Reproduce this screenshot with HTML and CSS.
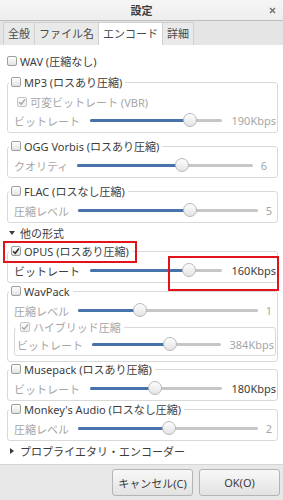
FILE: index.html
```html
<html>
    <head>
        <title>設定</title>
        <link rel="stylesheet" href="styles.css">
    </head>
    <body>
        <div class="window">
            <div class="titlebar">
                <span class="title">設定</span>
                <svg class="close" width="7" height="7" viewBox="0 0 7 7">
                    <path d="M1 1L6 6M6 1L1 6" stroke="#6a6a6a" stroke-width="1.3" />
                </svg>
            </div>

            <div class="tabs">
                <span class="tab">全般</span>
                <span class="tab">ファイル名</span>
                <span class="tab active">エンコード</span>
                <span class="tab">詳細</span>
            </div>

            <div class="page">
                <div class="check-row"><span class="box"></span>WAV (圧縮なし)</div>

                <fieldset class="frame first">
                    <legend><span class="box"></span>MP3 (ロスあり圧縮)</legend>
                    <div class="sub off">
                        <span class="box dim"><svg width="8" height="8" viewBox="0 0 8 8"><path d="M1 4.2L3.2 6.3L7 1.5" fill="none" stroke="#a8a8a8" stroke-width="1.4" /></svg></span>可変ビットレート (VBR)
                    </div>
                    <div class="scale-row rate">
                        <span class="label off">ビットレート</span>
                        <span class="track"><span class="fill" style="width:75.8%"></span><span class="knob" style="left:75.8%"></span></span>
                        <span class="value off">190Kbps</span>
                    </div>
                </fieldset>

                <fieldset class="frame">
                    <legend><span class="box"></span>OGG Vorbis (ロスあり圧縮)</legend>
                    <div class="scale-row quality">
                        <span class="label off">クオリティ</span>
                        <span class="track"><span class="fill" style="width:59.7%"></span><span class="knob" style="left:59.7%"></span></span>
                        <span class="value off">6</span>
                    </div>
                </fieldset>

                <fieldset class="frame">
                    <legend><span class="box"></span>FLAC (ロスなし圧縮)</legend>
                    <div class="scale-row level">
                        <span class="label off">圧縮レベル</span>
                        <span class="track"><span class="fill" style="width:62.2%"></span><span class="knob" style="left:62.2%"></span></span>
                        <span class="value off">5</span>
                    </div>
                </fieldset>

                <div class="expander"><span class="arrow-down"></span>他の形式</div>

                <div class="more">
                    <fieldset class="frame">
                        <legend><span class="box"><svg width="8" height="8" viewBox="0 0 8 8"><path d="M1 4.2L3.2 6.3L7 1.5" fill="none" stroke="#2e2e2e" stroke-width="1.5" /></svg></span>OPUS (ロスあり圧縮)</legend>
                        <div class="scale-row rate">
                            <span class="label">ビットレート</span>
                            <span class="track"><span class="fill" style="width:75%"></span><span class="knob" style="left:75%"></span></span>
                            <span class="value">160Kbps</span>
                        </div>
                    </fieldset>

                    <fieldset class="frame wavpack">
                        <legend><span class="box"></span>WavPack</legend>
                        <div class="scale-row level">
                            <span class="label off">圧縮レベル</span>
                            <span class="track"><span class="fill" style="width:34.4%"></span><span class="knob" style="left:34.4%"></span></span>
                            <span class="value off">1</span>
                        </div>
                        <fieldset class="frame nested">
                            <legend class="off"><span class="box dim"><svg width="8" height="8" viewBox="0 0 8 8"><path d="M1 4.2L3.2 6.3L7 1.5" fill="none" stroke="#a8a8a8" stroke-width="1.4" /></svg></span>ハイブリッド圧縮</legend>
                            <div class="scale-row hybrid">
                                <span class="label off">ビットレート</span>
                                <span class="track"><span class="fill" style="width:60.2%"></span><span class="knob" style="left:60.2%"></span></span>
                                <span class="value off">384Kbps</span>
                            </div>
                        </fieldset>
                    </fieldset>

                    <fieldset class="frame musepack">
                        <legend><span class="box"></span>Musepack (ロスあり圧縮)</legend>
                        <div class="scale-row rate">
                            <span class="label off">ビットレート</span>
                            <span class="track"><span class="fill" style="width:49.2%"></span><span class="knob" style="left:49.2%"></span></span>
                            <span class="value">180Kbps</span>
                        </div>
                    </fieldset>

                    <fieldset class="frame">
                        <legend><span class="box"></span>Monkey's Audio (ロスなし圧縮)</legend>
                        <div class="scale-row level">
                            <span class="label off">圧縮レベル</span>
                            <span class="track"><span class="fill" style="width:50.6%"></span><span class="knob" style="left:50.6%"></span></span>
                            <span class="value off">2</span>
                        </div>
                    </fieldset>
                </div>

                <div class="expander closed"><span class="arrow-right"></span>プロプライエタリ・エンコーダー</div>
            </div>

            <div class="buttons">
                <span class="btn">キャンセル(C)</span>
                <span class="btn">OK(O)</span>
            </div>

            <!-- red annotation boxes -->
            <div class="mark mark-opus"></div>
            <div class="mark mark-rate"></div>
        </div>
    </body>
</html>
```

FILE: styles.css
```css
body {
    margin: 0;
    font-family: "Noto Sans", "Noto Sans CJK JP", sans-serif;
    font-size: 11px;
    color: #3c3c3c;
    background: #e8e8e8;
}

.window {
    width: 283px;
    height: 500px;
    position: relative;
    display: flex;
    flex-direction: column;
    overflow: hidden;
}

/* title bar */
.titlebar {
    height: 20px;
    flex: none;
    border-bottom: 1px solid #bebebe;
    background: linear-gradient(#f5f5f5, #eeeeee);
    display: grid;
    grid-template-columns: 1fr auto 1fr;
    align-items: center;
}
.title {
    grid-column: 2;
    font-weight: bold;
    color: #3a3a3a;
}
.close {
    grid-column: 3;
    justify-self: end;
    margin-right: 7px;
}

/* notebook tabs */
.tabs {
    height: 24px;
    flex: none;
    display: flex;
    align-items: flex-end;
    padding-left: 3px;
    background: #e5e5e5;
}
.tab {
    height: 22px;
    line-height: 22px;
    padding: 0 4px;
    border: 1px solid #d0d0d0;
    border-bottom: none;
    margin-right: -1px;
    background: #e9e9e9;
    color: #4a4a4a;
}
.tab.active {
    background: #fff;
    position: relative;
    z-index: 1;
}

/* page */
.page {
    height: 420px;
    flex: none;
    box-sizing: border-box;
    padding-top: 6px;
    background: #fff;
    border-bottom: 1px solid #d6d6d6;
}

.box {
    width: 10px;
    height: 10px;
    box-sizing: border-box;
    flex: none;
    border: 1px solid #9e9e9e;
    border-radius: 2px;
    background: linear-gradient(#ffffff, #e2e2e2);
    display: inline-flex;
    align-items: center;
    justify-content: center;
    margin-right: 3px;
}
.box.dim {
    border-color: #c4c4c4;
    background: linear-gradient(#fbfbfb, #efefef);
}

.off {
    color: #a6a6a6;
}

.check-row {
    height: 20px;
    display: flex;
    align-items: center;
    padding-left: 7px;
}

/* frames */
.frame {
    margin: 6px 5px 0 7px;
    padding: 3px 1px 2px 1px;
    border: 1px solid #d9d9d9;
    border-radius: 3px;
    min-width: 0;
}
.frame.first {
    margin-top: 4px;
}
.frame legend {
    height: 14px;
    padding: 0 3px 0 1px;
    display: flex;
    align-items: center;
}
.frame legend .box {
    margin-left: 1px;
}

.sub {
    height: 19px;
    display: flex;
    align-items: center;
    padding-left: 8px;
}

.scale-row {
    height: 19px;
    display: flex;
    align-items: center;
    padding-left: 5px;
}
.scale-row .label {
    flex: none;
}
.scale-row .value {
    flex: none;
    text-align: right;
}
.rate .label { width: 76px; }
.rate .value { width: 54px; }
.quality { padding-right: 9px; }
.quality .label { width: 63px; }
.quality .value { width: 14px; }
.level { padding-right: 4px; }
.level .label { width: 64px; }
.level .value { width: 14px; }
.hybrid { padding-left: 1px; }
.hybrid .label { width: 75px; }
.hybrid .value { width: 53px; }

.track {
    flex: 1;
    height: 3px;
    border-radius: 2px;
    background: #c6c6c6;
    position: relative;
}
.fill {
    display: block;
    height: 3px;
    border-radius: 2px;
    background: #4673aa;
}
.knob {
    position: absolute;
    top: -6px;
    width: 14px;
    height: 14px;
    box-sizing: border-box;
    margin-left: -7px;
    border: 1px solid #b9b9b9;
    border-radius: 50%;
    background: linear-gradient(#fdfdfd, #e4e4e4);
}

/* expanders */
.expander {
    height: 20px;
    display: flex;
    align-items: center;
    padding-left: 9px;
}
.arrow-down {
    width: 0;
    height: 0;
    border-left: 3px solid transparent;
    border-right: 3px solid transparent;
    border-top: 4px solid #3c3c3c;
    margin-right: 5px;
}
.arrow-right {
    width: 0;
    height: 0;
    border-top: 3px solid transparent;
    border-bottom: 3px solid transparent;
    border-left: 4px solid #3c3c3c;
    margin-left: 1px;
    margin-right: 6px;
}

.more .frame {
    margin-top: 1px;
}
.more .frame.musepack {
    margin-top: 0;
}
.frame.wavpack {
    padding-bottom: 5px;
}
.more .frame.nested {
    margin: 0 0 0 5px;
    padding: 1px 1px 1px 1px;
}
.frame.nested legend {
    padding-left: 3px;
}

/* dialog buttons */
.buttons {
    height: 35px;
    flex: none;
    box-sizing: border-box;
    display: flex;
    justify-content: flex-end;
    gap: 6px;
    padding: 4px 3px 0 0;
    background: #e8e8e8;
}
.btn {
    width: 81px;
    height: 27px;
    box-sizing: border-box;
    border: 1px solid #b4b4b4;
    border-radius: 3px;
    background: linear-gradient(#f8f8f8, #e2e2e2);
    display: flex;
    align-items: center;
    justify-content: center;
}

/* annotations */
.mark {
    position: absolute;
    box-sizing: border-box;
    border: 2px solid #e3131b;
}
.mark-opus {
    left: 3px;
    top: 241px;
    width: 134px;
    height: 22px;
}
.mark-rate {
    left: 168px;
    top: 256px;
    width: 111px;
    height: 35px;
}
```
